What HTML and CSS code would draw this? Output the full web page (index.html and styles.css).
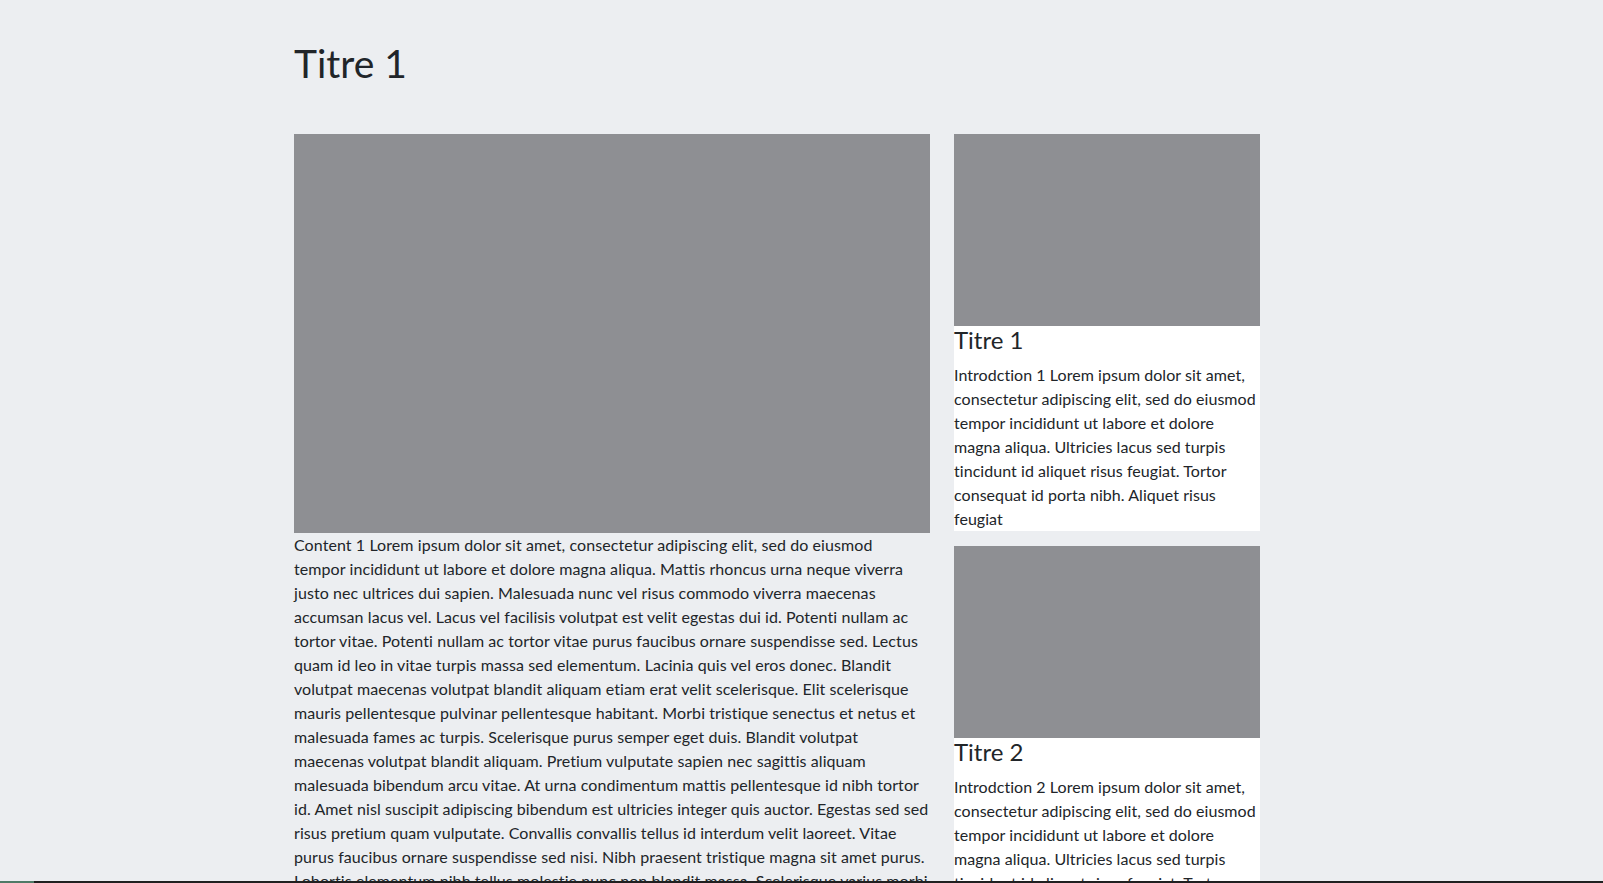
FILE: index.html
```html
<!DOCTYPE html>
<html lang="fr">
<head>
<meta charset="utf-8">
<title>Titre 1</title>
<link rel="stylesheet" href="styles.css">
</head>
<body>
<div class="container">
  <h1 class="page-title">Titre 1</h1>
  <div class="layout">
    <main class="main">
      <div class="hero-img"></div>
      <p class="content">Content 1 Lorem ipsum dolor sit amet, consectetur adipiscing elit, sed do eiusmod<br>
tempor incididunt ut labore et dolore magna aliqua. Mattis rhoncus urna neque viverra<br>
justo nec ultrices dui sapien. Malesuada nunc vel risus commodo viverra maecenas<br>
accumsan lacus vel. Lacus vel facilisis volutpat est velit egestas dui id. Potenti nullam ac<br>
tortor vitae. Potenti nullam ac tortor vitae purus faucibus ornare suspendisse sed. Lectus<br>
quam id leo in vitae turpis massa sed elementum. Lacinia quis vel eros donec. Blandit<br>
volutpat maecenas volutpat blandit aliquam etiam erat velit scelerisque. Elit scelerisque<br>
mauris pellentesque pulvinar pellentesque habitant. Morbi tristique senectus et netus et<br>
malesuada fames ac turpis. Scelerisque purus semper eget duis. Blandit volutpat<br>
maecenas volutpat blandit aliquam. Pretium vulputate sapien nec sagittis aliquam<br>
malesuada bibendum arcu vitae. At urna condimentum mattis pellentesque id nibh tortor<br>
id. Amet nisl suscipit adipiscing bibendum est ultricies integer quis auctor. Egestas sed sed<br>
risus pretium quam vulputate. Convallis convallis tellus id interdum velit laoreet. Vitae<br>
purus faucibus ornare suspendisse sed nisi. Nibh praesent tristique magna sit amet purus.<br>
Lobortis elementum nibh tellus molestie nunc non blandit massa. Scelerisque varius morbi<br>
enim nunc faucibus a pellentesque sit amet.</p>
    </main>
    <aside class="sidebar">
      <article class="card">
        <div class="card-img"></div>
        <h4 class="card-title">Titre 1</h4>
        <p class="card-text">Introdction 1 Lorem ipsum dolor sit amet, consectetur adipiscing elit, sed do eiusmod tempor incididunt ut labore et dolore magna aliqua. Ultricies lacus sed turpis tincidunt id aliquet risus feugiat. Tortor consequat id porta nibh. Aliquet risus feugiat</p>
      </article>
      <article class="card">
        <div class="card-img"></div>
        <h4 class="card-title">Titre 2</h4>
        <p class="card-text">Introdction 2 Lorem ipsum dolor sit amet, consectetur adipiscing elit, sed do eiusmod tempor incididunt ut labore et dolore magna aliqua. Ultricies lacus sed turpis tincidunt id aliquet risus feugiat. Tortor consequat id porta nibh. Aliquet risus feugiat</p>
      </article>
    </aside>
  </div>
</div>
<div class="screen-edge"><span class="screen-edge-start"></span></div>
</body>
</html>
```
FILE: styles.css
```css
html, body {
  margin: 0;
  padding: 0;
}
body {
  background: #eceef1;
  color: #212529;
  font-family: Lato, "Liberation Sans", sans-serif;
  font-size: 16px;
  line-height: 1.5;
}
.container {
  width: 966px;
  margin-left: 294px;
}
.page-title {
  margin: 0 0 46px;
  padding-top: 40px;
  font-size: 39px;
  line-height: 1.23;
  font-weight: 400;
}
.layout {
  display: grid;
  grid-template-columns: 636px 306px;
  column-gap: 24px;
  align-items: start;
}
.hero-img {
  height: 399px;
  background: #8e8f93;
}
.content {
  margin: 0;
  white-space: nowrap;
  letter-spacing: 0.08px;
}
.sidebar {
  display: flex;
  flex-direction: column;
  gap: 15px;
}
.card {
  background: #ffffff;
}
.card-img {
  height: 192px;
  background: #8e8f93;
}
.card-title {
  margin: 0 0 8px;
  font-size: 24px;
  line-height: 1.2;
  font-weight: 400;
}
.card-text {
  margin: 0;
  letter-spacing: 0.05px;
}
.screen-edge {
  position: fixed;
  left: 0;
  right: 0;
  bottom: 0;
  height: 2px;
  background: #202020;
  display: flex;
}
.screen-edge-start {
  width: 34px;
  background: #4f7a66;
}
```
